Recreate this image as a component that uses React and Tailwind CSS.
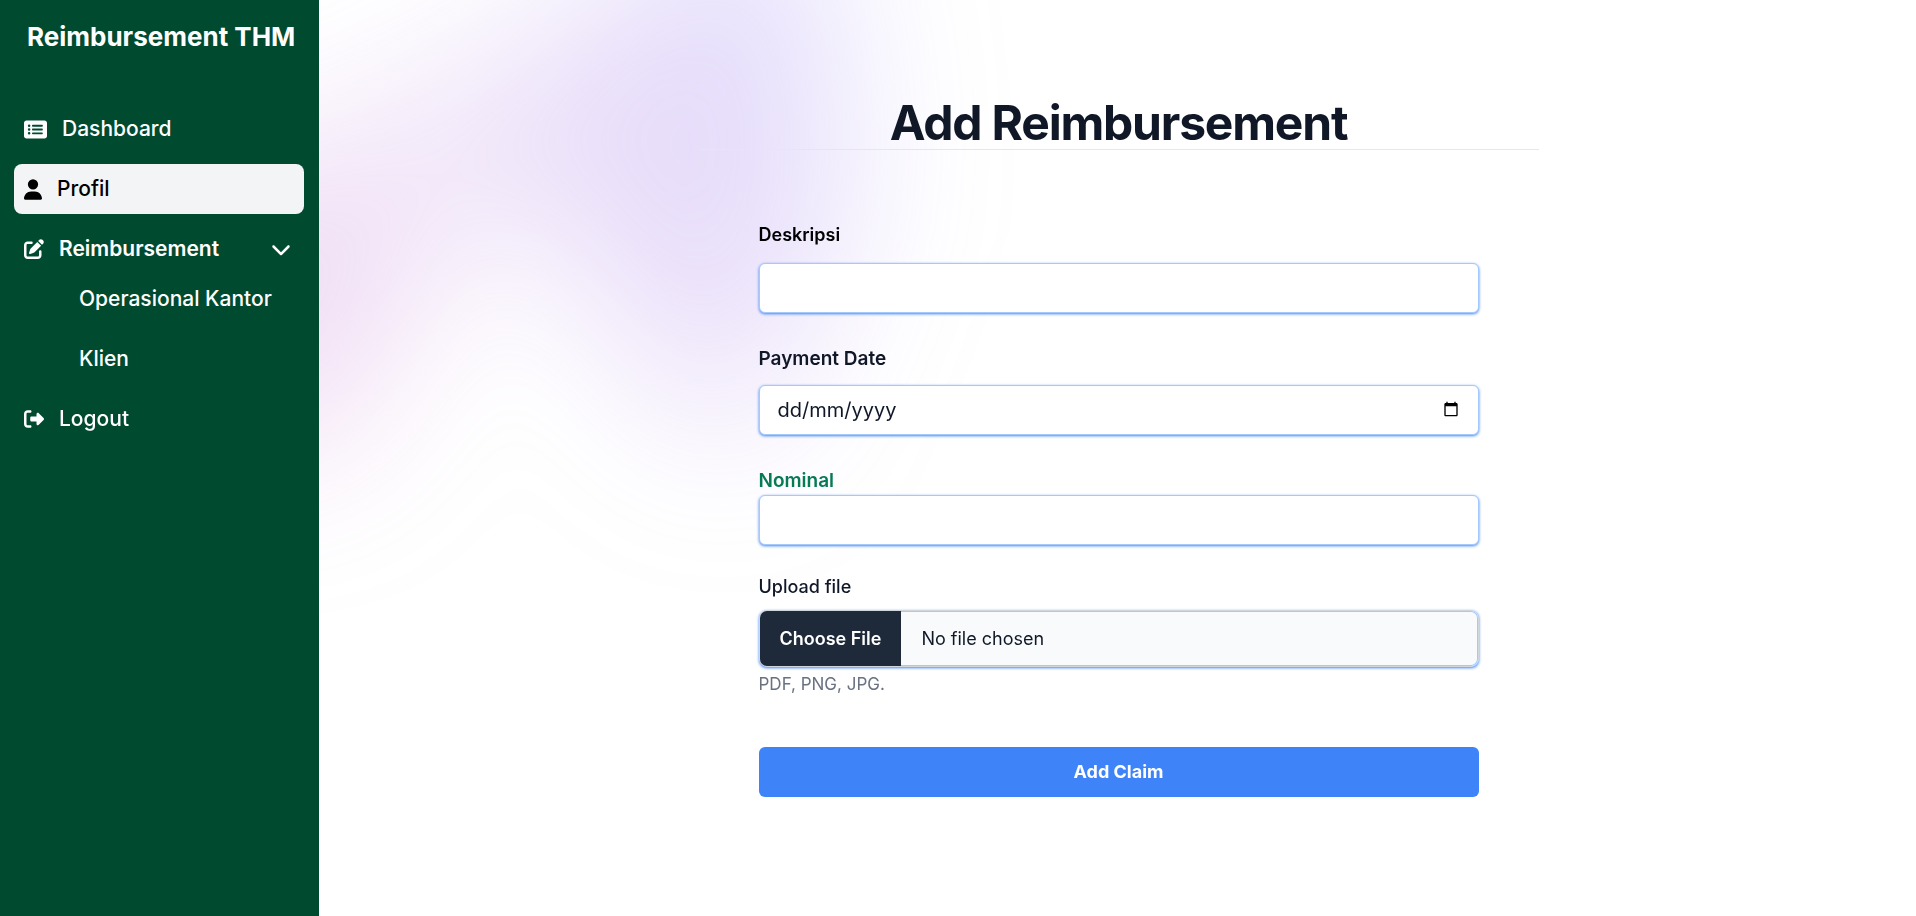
import { FaRectangleList, FaUser, FaPenToSquare, FaChevronDown, FaRightFromBracket } from "react-icons/fa6";

const row = "flex h-[50px] w-full items-center gap-[15px] rounded-lg px-[10px] text-left";
const field =
  "block h-[50px] w-full rounded-md border border-[#a3c9fd] bg-white px-[18px] text-xl text-gray-900 shadow-[0_1px_3px_0_#3b82f6] outline-none placeholder:text-gray-900";

function Sidebar() {
  return (
    <aside className="w-[319px] shrink-0 bg-[#004a30] px-[14px] pr-[15px] text-white">
      <h2 className="flex h-[72px] items-center px-[13px] text-[26px] font-bold whitespace-nowrap">Reimbursement THM</h2>
      <nav className="mt-8 flex flex-col gap-[10px] text-[21px] font-medium">
        <a href="#dashboard" className={row}>
          <FaRectangleList className="h-[21px] w-[23px]" />
          Dashboard
        </a>
        <a href="#profil" className="flex h-[50px] w-full items-center gap-[15px] rounded-lg bg-gray-100 px-[10px] text-black">
          <FaUser className="h-[21px] w-[18px]" />
          Profil
        </a>
        <div>
          <button type="button" className="flex h-[50px] w-full items-center gap-[15px] rounded-lg pr-[13px] pl-[10px] text-left font-semibold">
            <FaPenToSquare className="h-[20px] w-[20px]" />
            <span className="grow">Reimbursement</span>
            <FaChevronDown className="h-[20px] w-[20px]" />
          </button>
          <div className="flex flex-col gap-[10px] pl-[65px]">
            <a href="#operasional" className="flex h-[50px] items-center whitespace-nowrap">Operasional Kantor</a>
            <a href="#klien" className="flex h-[50px] items-center">Klien</a>
          </div>
        </div>
        <a href="#logout" className={row}>
          <FaRightFromBracket className="h-[20px] w-[20px]" />
          Logout
        </a>
      </nav>
    </aside>
  );
}

export default function App() {
  return (
    <div className="relative isolate flex min-h-screen overflow-hidden bg-white font-['Inter',sans-serif]">
      <div className="absolute inset-x-0 -top-[400px] -z-10 transform-gpu overflow-hidden blur-[80px]" aria-hidden="true">
        <div className="relative left-[calc(50%-800px)] aspect-[1155/678] w-[1444px] -translate-x-1/2 rotate-[30deg] bg-gradient-to-tr from-[#ff80b5] to-[#9089fc] opacity-30 [clip-path:polygon(74.1%_44.1%,100%_61.6%,97.5%_26.9%,85.5%_0.1%,80.7%_2%,72.5%_32.5%,60.2%_62.4%,52.4%_68.1%,47.5%_58.3%,45.2%_34.5%,27.5%_76.7%,0.1%_64.9%,17.9%_100%,27.6%_76.8%,76.1%_97.7%,74.1%_44.1%)]" />
      </div>
      <Sidebar />
      <main className="min-w-0 grow pt-24 pr-8 pl-[34px]">
        <div className="mx-auto max-w-[840px] border-b border-gray-200">
          <h1 className="text-center text-5xl leading-[53px] font-bold tracking-tight text-gray-900">Add Reimbursement</h1>
        </div>
        <form className="mx-auto mt-[71px] max-w-[720px]">
          <label htmlFor="desc" className="mb-[14px] block text-lg leading-[28px] font-semibold text-black">Deskripsi</label>
          <input id="desc" type="text" className={field} />
          <label htmlFor="date" className="mt-8 mb-3 block text-[19px] leading-[28px] font-semibold text-gray-900">Payment Date</label>
          <div className="relative">
            <input id="date" type="text" inputMode="numeric" placeholder="dd/mm/yyyy" className={field} />
            <button type="button" aria-label="Open calendar" className="absolute top-4 right-5 h-4 w-4 text-black">
              <svg viewBox="0 0 24 24" fill="currentColor" className="h-4 w-4">
                <path d="M20 3h-1V1h-2v2H7V1H5v2H4c-1.100 0-2 .9-2 2v16c0 1.100.9 2 2 2h16c1.100 0 2-.9 2-2V5c0-1.100-.9-2-2-2zm0 18H4V8h16v13z" />
              </svg>
            </button>
          </div>
          <label htmlFor="nominal" className="mt-8 block text-[19px] leading-[28px] font-semibold text-[#057a55]">Nominal</label>
          <input id="nominal" type="text" className={field} />
          <label htmlFor="upload" className="mt-7 mb-[9px] block text-lg leading-[28px] font-medium text-gray-900">Upload file</label>
          <input
            id="upload"
            type="file"
            className="block w-full cursor-pointer rounded-lg border border-gray-300 bg-gray-50 text-lg leading-[28px] text-gray-900 shadow-[0_1px_3px_0_#3b82f6,inset_0_0_0_1px_#a3c9fd] file:mr-5 file:h-[55px] file:border-0 file:bg-gray-800 file:px-5 file:font-semibold file:text-white"
          />
          <p className="mt-[3px] text-[17px] leading-[28px] text-gray-500">PDF, PNG, JPG.</p>
          <button type="submit" className="mt-[49px] block h-[50px] w-full rounded-md bg-[#3f83f8] text-center text-lg font-bold text-white">
            Add Claim
          </button>
        </form>
      </main>
    </div>
  );
}
